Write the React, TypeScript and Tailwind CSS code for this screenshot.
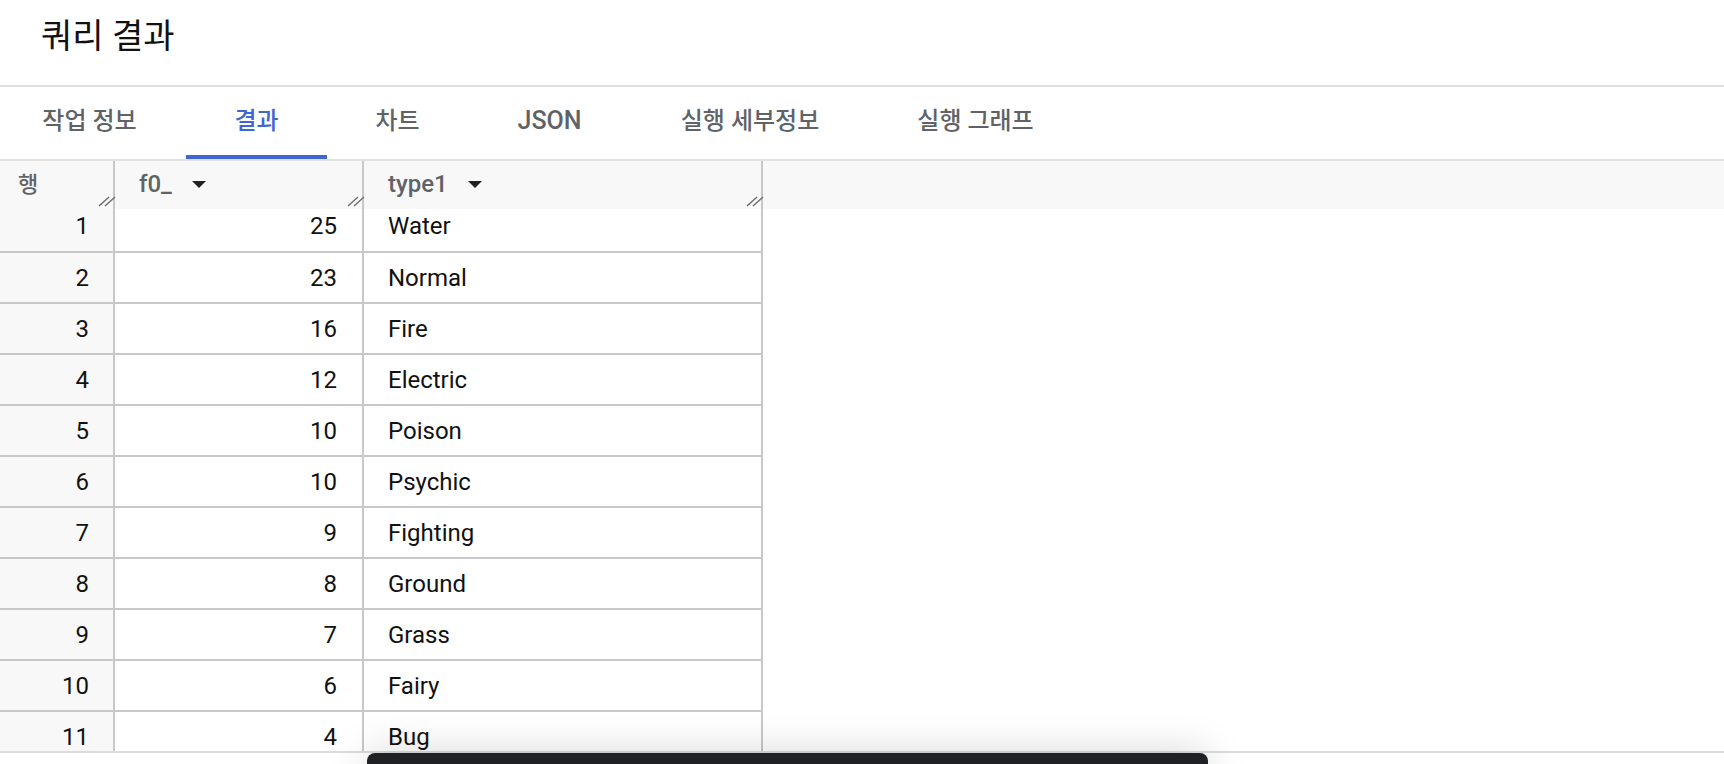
import React from 'react';

const rows: [number, number, string][] = [
  [1, 25, 'Water'],
  [2, 23, 'Normal'],
  [3, 16, 'Fire'],
  [4, 12, 'Electric'],
  [5, 10, 'Poison'],
  [6, 10, 'Psychic'],
  [7, 9, 'Fighting'],
  [8, 8, 'Ground'],
  [9, 7, 'Grass'],
  [10, 6, 'Fairy'],
  [11, 4, 'Bug'],
];

function Grip() {
  return (
    <svg
      className="absolute right-[-3px] bottom-[2px]"
      width="18"
      height="13"
      viewBox="0 0 18 13"
      fill="none"
      stroke="#6b6b6b"
      strokeWidth="1.4"
    >
      <path d="M1 12 L11 3" />
      <path d="M7 12 L17 3" />
    </svg>
  );
}

function SortArrow() {
  return (
    <span className="ml-[20px] inline-block w-0 h-0 border-l-[7.5px] border-r-[7.5px] border-t-[7.5px] border-l-transparent border-r-transparent border-t-[#202124]" />
  );
}

export default function App() {
  const tabs = [
    { label: '작업 정보', w: 'w-[179px] mr-[7px]' },
    { label: '결과', w: 'w-[141px]', active: true },
    { label: '차트', w: 'w-[141px]' },
    { label: 'JSON', w: 'w-[163px]' },
    { label: '실행 세부정보', w: 'w-[238px]' },
    { label: '실행 그래프', w: 'w-[213px]' },
  ];

  return (
    <div
      className="relative h-[764px] w-full overflow-hidden bg-white flex flex-col"
      style={{ fontFamily: "Roboto, 'Noto Sans CJK KR', sans-serif" }}
    >
      {/* Title */}
      <div className="h-[85px] pl-[41px] pt-[16px] shrink-0">
        <h1 className="text-[34px] leading-[40px] text-[#111] font-normal">쿼리 결과</h1>
      </div>
      <div className="h-[2px] bg-[#e0e0e0] shrink-0" />

      {/* Tabs */}
      <div className="flex h-[72px] shrink-0">
        {tabs.map((t) => (
          <div
            key={t.label}
            className={`${t.w} flex items-center justify-center border-b-4 text-[24px] font-medium ${
              t.active ? 'border-[#3e66d4] text-[#3e66d4]' : 'border-transparent text-[#5f6368]'
            } ${t.label === 'JSON' ? 'text-[25px]' : ''}`}
          >
            {t.label}
          </div>
        ))}
      </div>
      <div className="h-[2px] bg-[#e0e0e0] shrink-0" />

      {/* Table */}
      <div className="flex-1 overflow-hidden">
        <div className="flex h-[48px] bg-[#f8f8f8] text-[24px] font-medium text-[#5f6368]">
          <div className="relative w-[115px] border-r-2 border-[#c8c8c8] pl-[18px] flex items-center pb-[2px]">
            <span className="text-[22px]">행</span>
            <Grip />
          </div>
          <div className="relative w-[249px] border-r-2 border-[#c8c8c8] pl-[24px] flex items-center pb-[2px]">
            <span>f0_</span>
            <SortArrow />
            <Grip />
          </div>
          <div className="relative w-[399px] border-r-2 border-[#c8c8c8] pl-[24px] flex items-center pb-[2px]">
            <span>type1</span>
            <SortArrow />
            <Grip />
          </div>
        </div>

        {rows.map(([n, v, type], i) => (
          <div key={n} className="flex w-[763px] text-[24px] text-[#111]">
            <div
              className={`w-[115px] bg-[#f8f8f8] border-r-2 border-b-2 border-[#c8c8c8] flex items-center justify-end pr-[24px] ${
                i === 0 ? 'h-[44px] pb-[8px]' : 'h-[51px]'
              }`}
            >
              {n}
            </div>
            <div
              className={`w-[249px] border-r-2 border-b-2 border-[#c8c8c8] flex items-center justify-end pr-[25px] ${
                i === 0 ? 'h-[44px] pb-[8px]' : 'h-[51px]'
              }`}
            >
              {v}
            </div>
            <div
              className={`w-[399px] border-r-2 border-b-2 border-[#c8c8c8] flex items-center pl-[24px] ${
                i === 0 ? 'h-[44px] pb-[8px]' : 'h-[51px]'
              }`}
            >
              {type}
            </div>
          </div>
        ))}
      </div>
      <div className="h-[2px] bg-[#dcdcdc] shrink-0" />
      <div className="h-[11px] shrink-0" />

      {/* Snackbar peeking from the bottom */}
      <div className="absolute left-[367px] top-[753px] w-[841px] h-[30px] rounded-t-[8px] bg-[#202124] shadow-[0_0_40px_rgba(0,0,0,0.18)]" />
    </div>
  );
}
